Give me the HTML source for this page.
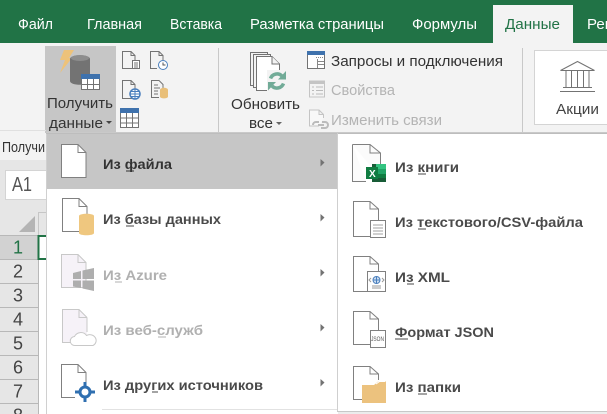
<!DOCTYPE html>
<html lang="ru"><head><meta charset="utf-8"><title>Excel</title>
<style>
html,body{margin:0;padding:0;width:607px;height:414px;overflow:hidden;background:#f3f3f3}
svg{display:block;font-family:"Liberation Sans","Noto Sans CJK SC",sans-serif}
.t{font-size:15px;fill:#fff}
.r{font-size:15px;fill:#444}
.d{font-size:15px;fill:#b4b4b4}
.m{font-size:14px;font-weight:bold;fill:#4a4a4a}
.g{font-size:14px;font-weight:bold;fill:#b0b0b0}
.n{font-size:18px;fill:#444;text-anchor:middle}
.p{fill:#fff;stroke:#808080;stroke-width:1}
</style></head><body>
<svg width="607" height="414" viewBox="0 0 607 414" xmlns="http://www.w3.org/2000/svg">
<defs>
<g id="doc"><path class="p" d="M.5.5H17L25 8.500V33.500H.5Z"/><path d="M17 .5V8.500H25" fill="none" stroke="#808080"/></g>
</defs>
<rect width="607" height="414" fill="#f3f3f3"/>
<rect width="607" height="43" fill="#217346"/>
<rect x="493" y="5" width="80" height="38" fill="#f3f3f3"/>
<text class="t" x="18" y="29" textLength="35" lengthAdjust="spacingAndGlyphs">Файл</text>
<text class="t" x="87" y="29" textLength="55" lengthAdjust="spacingAndGlyphs">Главная</text>
<text class="t" x="170" y="29" textLength="52" lengthAdjust="spacingAndGlyphs">Вставка</text>
<text class="t" x="250" y="29" textLength="134" lengthAdjust="spacingAndGlyphs">Разметка страницы</text>
<text class="t" x="412" y="29" textLength="65" lengthAdjust="spacingAndGlyphs">Формулы</text>
<text class="t" x="505" y="29" textLength="55" style="fill:#217346" lengthAdjust="spacingAndGlyphs">Данные</text>
<text class="t" x="587" y="29">Рец</text>

<!-- ribbon -->
<rect x="45" y="46" width="71" height="87" fill="#c6c6c6"/>
<path d="M64 50H74L69 58H72L60 73L65 60H60Z" fill="#edc27a"/>
<path d="M70 59C70 54 90 54 90 59V81C90 86 70 86 70 81Z" fill="#737373"/>
<ellipse cx="80" cy="58" rx="9" ry="3" fill="#8d8d8d"/>
<rect x="81.500" y="74.500" width="18" height="15" fill="#fff" stroke="#737373"/>
<rect x="81" y="74" width="19" height="5" fill="#3f72ad"/>
<path d="M81 84.500H100M87.500 79V90M93.500 79V90" stroke="#737373"/>
<text class="r" x="47" y="108" textLength="66" lengthAdjust="spacingAndGlyphs" style="fill:#333">Получить</text>
<text class="r" x="49" y="128" textLength="54" lengthAdjust="spacingAndGlyphs" style="fill:#333">данные</text>
<path d="M106 121H112L109 124Z" fill="#444"/>

<!-- small icons -->
<g fill="none" stroke="#737373">
<path d="M132 68.500H122.500V51.500H131L135 55.500V60"/><path d="M131 51.500V55.500H135"/>
<rect x="132.500" y="60.500" width="7" height="8" fill="#fff"/><path d="M134 63H138M134 65H138M134 67H138"/>
<path d="M157 68.500H150.500V51.500H159L163 55.500V60"/><path d="M159 51.500V55.500H163"/>
<path d="M133 98.500H122.500V80.500H131L135 84.500V90"/><path d="M131 80.500V84.500H135"/>
<path d="M159 97.500H151.500V80.500H159L163 84.500V88"/><path d="M154 85H158M154 88H160M154 91H158M154 94H158"/>
</g>
<circle cx="163" cy="65" r="4.500" fill="#fff" stroke="#4a7fbd"/><path d="M163 62.500V65H165.500" fill="none" stroke="#555"/>
<circle cx="135" cy="94" r="5" fill="#fff" stroke="#4a7fbd" stroke-width="1.500"/><path d="M130 94H140M135 89V99M131 91.500H139M131 96.500H139" stroke="#4a7fbd"/>
<path d="M160 90C160 87 168 87 168 90V96.500C168 99 160 99 160 96.500Z" fill="#e9bf78"/>
<rect x="120.500" y="108.500" width="18" height="19" fill="#fff" stroke="#737373"/>
<rect x="120" y="108" width="19" height="5" fill="#3f72ad"/>
<path d="M120 118H139M120 123H139M126.500 113V128M132.500 113V128" stroke="#737373"/>

<rect x="218" y="48" width="1" height="84" fill="#c8c8c8"/>
<rect x="522" y="48" width="1" height="84" fill="#c8c8c8"/>

<!-- refresh -->
<g fill="#f3f3f3" stroke="#737373">
<path d="M250.500 52.500H267.500V85.500H250.500Z"/><path d="M253.500 54.500H270.500V87.500H253.500Z"/>
<path fill="#fff" d="M256.500 56.500H272L279.500 64V90.500H256.500Z"/><path d="M272 56.500V64H279.500"/>
</g>
<rect x="267" y="70" width="20" height="21" fill="#f3f3f3"/>
<path d="M270.500 78.500A7 7 0 0 1 282 76M283.500 83.500A7 7 0 0 1 272 86" fill="none" stroke="#71ab97" stroke-width="3.500"/>
<path d="M286 71V79.500H278ZM268 90.500V82H276Z" fill="#71ab97"/>
<text class="r" x="231" y="109" textLength="69" lengthAdjust="spacingAndGlyphs" style="fill:#333">Обновить</text>
<text class="r" x="249" y="128" textLength="24" lengthAdjust="spacingAndGlyphs" style="fill:#333">все</text>
<path d="M276 122H282L279 125Z" fill="#666"/>

<!-- group right -->
<rect x="307.500" y="51.500" width="17" height="17" fill="#fff" stroke="#737373"/>
<rect x="307" y="51" width="18" height="4" fill="#3f72ad"/>
<path d="M317.500 59V68M318 61.500H324M318 64.500H324" stroke="#888"/>
<path d="M316 57.500H323" stroke="#888" stroke-dasharray="1 1"/>
<text class="r" x="331" y="66" textLength="172" lengthAdjust="spacingAndGlyphs" style="fill:#333">Запросы и подключения</text>
<rect x="309.500" y="81" width="15" height="16" fill="#f3f3f3" stroke="#c4c4c4"/><rect x="309" y="81" width="16" height="3" fill="#c4c4c4"/>
<path d="M316 87H323M316 90.500H323M316 94H323M312 87H314M312 90.500H314M312 94H314" stroke="#bbb"/>
<text class="d" x="331" y="95" textLength="64" lengthAdjust="spacingAndGlyphs">Свойства</text>
<path d="M319 126H309.500V110H319L323.500 114.500V118M319 110V114.500H323.500" fill="#f8f8f8" stroke="#c4c4c4"/>
<path d="M313 125a3 3 0 0 1 3-3h3M322 122h3a3 3 0 0 1 0 6h-4M318 125h6" fill="none" stroke="#bbb" stroke-width="2"/>
<text class="d" x="331" y="125" textLength="111" lengthAdjust="spacingAndGlyphs">Изменить связи</text>

<!-- stocks -->
<rect x="534.500" y="50.500" width="80" height="74" fill="#fff" stroke="#d4d4d4"/>
<path d="M560.500 70.500L577.500 61.500L594.500 70.500ZM566 71V87M571.500 71V87M577.500 71V87M583.500 71V87M589 71V87M563 87.500H592M560 91.500H595" fill="#fff" stroke="#737373"/>
<text class="r" x="556" y="114" textLength="43" lengthAdjust="spacingAndGlyphs">Акции</text>

<!-- left grid -->
<rect x="0" y="160" width="46" height="254" fill="#e6e6e6"/>
<text x="2" y="152" font-size="14.500" fill="#333" textLength="43" lengthAdjust="spacingAndGlyphs">Получи</text>
<rect x="5.500" y="170.500" width="41" height="29" fill="#fff" stroke="#d4d4d4"/>
<text x="12" y="191" font-size="20" fill="#555" textLength="20" lengthAdjust="spacingAndGlyphs">A1</text>
<path d="M19 232H35V216Z" fill="#b4b4b4"/>
<rect x="38.500" y="212.500" width="8" height="23" fill="#e6e6e6" stroke="#c6c6c6"/>
<rect x="0" y="235" width="38" height="179" fill="#e6e6e6"/>
<rect x="0" y="235" width="38" height="24" fill="#d2d2d2"/>
<rect x="38" y="235" width="8" height="179" fill="#fff"/>
<path d="M0 235.500H38M0 259.500H38M0 283.500H38M0 307.500H38M0 331.500H38M0 355.500H38M0 379.500H38M0 403.500H38M38.500 235V414" stroke="#b8b8b8"/>
<path d="M46 236H38.500V259H46" fill="none" stroke="#217346" stroke-width="2"/>
<text class="n" x="18" y="253.500" style="fill:#217346">1</text>
<text class="n" x="18" y="277.500">2</text><text class="n" x="18" y="301.500">3</text><text class="n" x="18" y="325.500">4</text>
<text class="n" x="18" y="349.500">5</text><text class="n" x="18" y="373.500">6</text><text class="n" x="18" y="397.500">7</text><text class="n" x="18" y="421.500">8</text>

<rect x="0" y="130" width="46" height="1" fill="#e0e0e0"/>
<rect x="46" y="132" width="561" height="1" fill="#c9c9c9"/>

<!-- menu -->
<rect x="46" y="133" width="561" height="281" fill="#fff"/>
<rect x="46" y="133" width="1" height="281" fill="#d0d0d0"/>
<rect x="46" y="133" width="561" height="1" fill="#bdbdbd"/>
<rect x="337" y="133" width="1" height="279" fill="#cfcfcf"/>
<rect x="47" y="134" width="290" height="55" fill="#c6c6c6"/>
<rect x="338" y="412" width="269" height="2" fill="#ececec"/>
<rect x="337" y="411" width="270" height="1" fill="#c8c8c8"/>
<rect x="102" y="409" width="235" height="1" fill="#e2e2e2"/>

<!-- left menu items -->
<use href="#doc" x="61" y="144"/>
<text class="m" x="103" y="169" textLength="69" style="fill:#333" lengthAdjust="spacingAndGlyphs">Из файла</text>
<path d="M126 171H134" stroke="#333"/>
<path d="M320.500 159V166.500L324.500 162.500Z" fill="#737373"/>

<use href="#doc" x="62" y="198"/>
<path d="M79 216C79 213 94 213 94 216V233C94 236 79 236 79 233Z" fill="#efc77f"/>
<text class="m" x="103" y="224" textLength="118" lengthAdjust="spacingAndGlyphs">Из базы данных</text>
<path d="M126 226H134" stroke="#4a4a4a"/>
<path d="M320.500 214V221.500L324.500 217.500Z" fill="#737373"/>

<path d="M61.500 254.500H78L86 262.500V287.500H61.500Z" fill="#f6f2f8" stroke="#c8c8c8"/><path d="M78 254.500V262.500H86" fill="none" stroke="#c8c8c8"/>
<path d="M73 273L81 271V279H73ZM82.500 270.500L94 268V279H82.500ZM73 280.500H81V288L73 286.500ZM82.500 280.500H94V291L82.500 288.500Z" fill="#aeaeae"/>
<text class="g" x="103" y="280" textLength="64" lengthAdjust="spacingAndGlyphs">Из Azure</text>
<path d="M115 282H122" stroke="#b0b0b0"/>
<path d="M320.500 269V276.500L324.500 272.500Z" fill="#737373"/>

<path d="M62.500 309.500H79L87 317.500V342.500H62.500Z" fill="#f6f2f8"/>
<path d="M87 317.500V332M71 342.500H62.500V309.500H79L87 317.500M79 309.500V317.500H87" fill="none" stroke="#c8c8c8"/>
<path d="M75 345.500a4.500 4.500 0 0 1 -.5 -9a7 7 0 0 1 12 -1a5.500 5 0 0 1 6.500 10Z" fill="#fff" stroke="#c8c8c8"/>
<text class="g" x="103" y="335" textLength="100" lengthAdjust="spacingAndGlyphs">Из веб-служб</text>
<path d="M158 337H166" stroke="#b0b0b0"/>
<path d="M320.500 324V331.500L324.500 327.500Z" fill="#737373"/>

<path d="M75 397.500H61.500V364.500H78L86 372.500V383M78 364.500V372.500H86" fill="#fff" stroke="#808080"/>
<circle cx="85" cy="392" r="5" fill="#fff" stroke="#2f6fb0" stroke-width="3"/>
<path d="M75 392H79M91 392H95M85 382V386M85 398V402" stroke="#2f6fb0" stroke-width="3"/>
<text class="m" x="103" y="390" textLength="160" lengthAdjust="spacingAndGlyphs">Из других источников</text>
<path d="M152 392H158" stroke="#4a4a4a"/>
<path d="M320.500 379V386.500L324.500 382.500Z" fill="#737373"/>

<!-- submenu items -->
<path d="M352.500 144.500H370L380.500 153V178M366 181.500H352.500V144.500" fill="#fbfbfb" stroke="#808080"/>
<path d="M370 144.500V153H380.500" fill="none" stroke="#808080"/>
<rect x="372" y="164" width="14" height="18" fill="#185c37"/>
<rect x="376" y="164" width="10" height="5" fill="#33c481"/><rect x="376" y="169" width="10" height="5" fill="#21a366"/><rect x="376" y="174" width="10" height="4" fill="#107c41"/>
<rect x="366" y="167" width="12" height="12" fill="#107c41"/>
<text x="369" y="177" font-size="10" font-weight="bold" fill="#fff">X</text>
<text class="m" x="395" y="172" textLength="64" lengthAdjust="spacingAndGlyphs">Из книги</text>
<path d="M418 174H426" stroke="#4a4a4a"/>

<path d="M370 236.500H353.500V201.500H370L378.500 209V220M370 201.500V209H378.500" fill="#fff" stroke="#808080"/>
<rect x="370.500" y="220.500" width="15" height="17" fill="#fff" stroke="#808080"/>
<path d="M373 225H383M373 228H383M373 231H383M373 234H383" stroke="#a0a0a0"/>
<text class="m" x="395" y="227" textLength="188" lengthAdjust="spacingAndGlyphs">Из текстового/CSV-файла</text>
<path d="M418 229H426" stroke="#4a4a4a"/>

<path d="M368 291.500H353.500V256.500H370L378.500 264V275M370 256.500V264H378.500" fill="#fff" stroke="#808080"/>
<rect x="367.500" y="271.500" width="18" height="20" fill="#fff" stroke="#808080"/>
<circle cx="376.500" cy="280" r="3.500" fill="#cfe0f2" stroke="#4a7fbd"/><path d="M373 280H380M376.500 276.500V283.500" stroke="#4a7fbd"/>
<path d="M371 278L369 280L371 282M382 278L384 280L382 282M372 286H381M372 288H381" fill="none" stroke="#999"/>
<text class="m" x="395" y="282" textLength="55" lengthAdjust="spacingAndGlyphs">Из XML</text>
<path d="M407 284H414" stroke="#4a4a4a"/>

<path d="M370 344.500H353.500V311.500H370L378.500 319V330M370 311.500V319H378.500" fill="#fff" stroke="#808080"/>
<rect x="370.500" y="330.500" width="15" height="17" fill="#fff" stroke="#808080"/>
<text x="371" y="341" font-size="6" fill="#555" textLength="13" lengthAdjust="spacingAndGlyphs">JSON</text>
<text class="m" x="395" y="337" textLength="99" lengthAdjust="spacingAndGlyphs">Формат JSON</text>
<path d="M395 339H408" stroke="#4a4a4a"/>

<path d="M362 399.500H353.500V366.500H370L378.500 374V380M370 366.500V374H378.500" fill="#fff" stroke="#808080"/>
<path d="M362 385H374L378 381.500H386V403H362Z" fill="#ecc27e"/>
<path d="M376 384L379.500 381.500H385" fill="none" stroke="#fff"/>
<text class="m" x="395" y="392" textLength="66" lengthAdjust="spacingAndGlyphs">Из папки</text>
<path d="M418 394H427" stroke="#4a4a4a"/>
</svg>
</body></html>
